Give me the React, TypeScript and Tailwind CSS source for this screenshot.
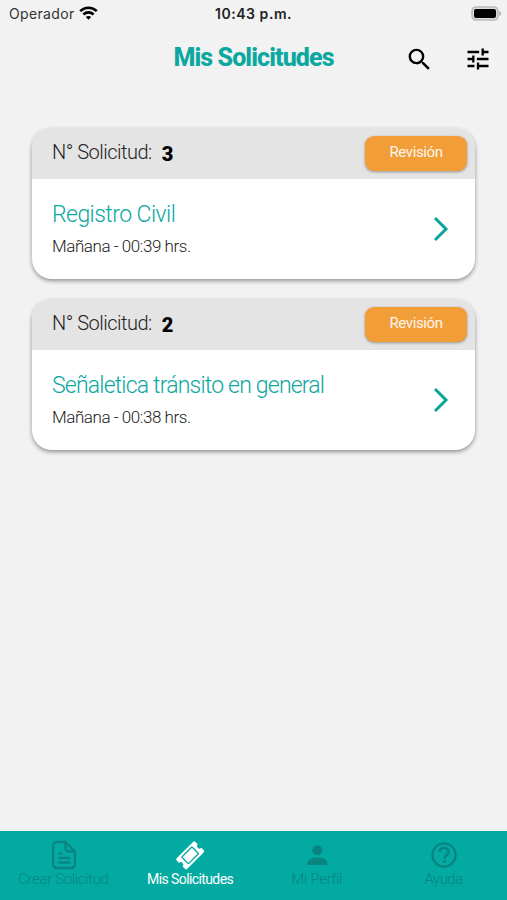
import { MdSearch, MdTune } from "react-icons/md";

const solicitudes = [
  {
    numero: 3,
    titulo: "Registro Civil",
    hora: "Mañana - 00:39 hrs.",
    estado: "Revisión",
    tracking: "tracking-[-0.55px]",
  },
  {
    numero: 2,
    titulo: "Señaletica tránsito en general",
    hora: "Mañana - 00:38 hrs.",
    estado: "Revisión",
    tracking: "tracking-[-0.8px]",
  },
];

function StatusBar() {
  return (
    <div className="grid h-7 grid-cols-3 items-center px-[9px] pb-0.5 font-['Inter',sans-serif] text-[14px] text-[#222]">
      <div className="flex items-center gap-1">
        <span className="tracking-[0.35px] text-[#333]">Operador</span>
        <svg className="h-[14px] w-[19px]" viewBox="0 0 19 14" fill="none" stroke="#000" strokeWidth="2.6">
          <path d="M1.2 5.2C5.8.6 13.2.6 17.8 5.2" />
          <path d="M4.4 8.5c2.9-2.8 7.3-2.8 10.2 0" />
          <path d="M9.5 13.7 6.8 11c1.5-1.4 3.9-1.4 5.4 0z" fill="#000" stroke="none" />
        </svg>
      </div>
      <span className="text-center font-semibold tracking-[0.55px] whitespace-nowrap">10:43 p.m.</span>
      <svg className="-mr-1 h-[15px] w-[31px] justify-self-end" viewBox="0 0 31 15">
        <rect x="1" y="1" width="26" height="13" rx="4" fill="#ddd" stroke="#bbb" strokeWidth="1.6" />
        <rect x="3" y="3" width="22" height="9" rx="2" fill="#000" />
        <path d="M28.4 5v5c2.2-.7 2.2-4.3 0-5z" fill="#aaa" />
      </svg>
    </div>
  );
}

function DocumentIcon() {
  return (
    <svg className="size-8" viewBox="0 0 32 32" fill="none" stroke="currentColor" strokeWidth="2.4" strokeLinecap="round" strokeLinejoin="round">
      <path d="M18.5 3H10a4 4 0 0 0-4 4v18a4 4 0 0 0 4 4h14a4 4 0 0 0 4-4V12.5z" />
      <path d="M18.5 3v5.5a4 4 0 0 0 4 4H28M12.5 14.500h2M12.5 19h10M12.5 23.500h10" />
    </svg>
  );
}

function TicketIcon() {
  return (
    <svg className="size-8" viewBox="0 0 32 32" fill="currentColor">
      <g transform="rotate(-45 16.5 16)">
        <path d="M4.5 8.5h23a1.7 1.7 0 0 1 1.7 1.7v3.3a2.5 2.5 0 0 0 0 5v3.3a1.7 1.7 0 0 1-1.7 1.7h-23a1.7 1.7 0 0 1-1.7-1.7v-3.3a2.500 2.500 0 0 0 0-5v-3.3a1.7 1.7 0 0 1 1.7-1.7z" />
        <rect x="8.8" y="11.3" width="14.4" height="9.4" rx="0.5" fill="none" stroke="#03aaa2" strokeWidth="1.3" />
      </g>
    </svg>
  );
}

function PersonIcon() {
  return (
    <svg className="size-8" viewBox="0 0 32 32" fill="currentColor">
      <circle cx="16.3" cy="11.3" r="5" />
      <path d="M6.300 26v-1.500c0-8 20-8 20 0V26z" />
    </svg>
  );
}

function HelpIcon() {
  return (
    <svg className="size-8" viewBox="0 0 32 32" fill="none" stroke="currentColor" strokeWidth="2.2">
      <circle cx="16" cy="16" r="11.6" />
      <path d="M11.7 13c0-5.8 9-5.5 9-.3 0 3.5-4.2 3.3-4.2 7" strokeWidth="2.6" />
      <path d="M16.4 21.2v2.7" strokeWidth="2.8" />
    </svg>
  );
}

const tabs = [
  { nombre: "Crear Solicitud", icono: <DocumentIcon />, clase: "tracking-[-0.35px] text-[#088580]" },
  { nombre: "Mis Solicitudes", icono: <TicketIcon />, clase: "text-[14px] font-normal tracking-[-0.6px] text-white" },
  { nombre: "Mi Perfil", icono: <PersonIcon />, clase: "tracking-[-0.3px] text-[#088580]" },
  { nombre: "Ayuda", icono: <HelpIcon />, clase: "tracking-[-0.5px] text-[#088580]" },
];

export default function App() {
  return (
    <main className="flex h-[900px] w-[507px] flex-col overflow-hidden bg-[#f2f2f2] font-['Roboto',sans-serif]">
      <StatusBar />
      <header className="grid h-[62px] grid-cols-[1fr_auto_1fr] items-center px-4">
        <h1 className="col-start-2 pb-[3px] text-[25px] leading-none font-extrabold tracking-[-0.9px] text-[#0ba8a0]">
          Mis Solicitudes
        </h1>
        <div className="flex items-center justify-end gap-[30px]">
          <MdSearch size={29} />
          <MdTune size={28} className="-mr-px" />
        </div>
      </header>

      <section className="flex flex-1 flex-col gap-5 px-8 pt-[38px]">
        {solicitudes.map((s) => (
          <article
            key={s.numero}
            className="h-[151px] overflow-hidden rounded-[20px] bg-white shadow-[0_2px_4px_rgba(0,0,0,0.4)]"
          >
            <div className="flex h-[51px] items-center justify-between bg-[#e4e4e4] pr-2 pl-5">
              <p className="flex items-center pb-1 text-[20px] font-light tracking-[-0.5px] text-[#222]">
                N° Solicitud: <b className="ml-2.5 pt-1 font-black text-black">{s.numero}</b>
              </p>
              <span className="flex h-[35px] w-[102px] items-center justify-center rounded-[9px] bg-[#f19d38] pb-0.5 text-[15px] tracking-[-0.4px] text-white/90 shadow-[0_1px_3px_rgba(0,0,0,0.35)]">
                {s.estado}
              </span>
            </div>
            <div className="flex h-[100px] items-center justify-between pr-[26px] pl-5">
              <div className="pt-0.5">
                <h2 className={`text-[23px] leading-8 font-light text-[#0ba8a0] ${s.tracking}`}>{s.titulo}</h2>
                <p className="text-[17px] leading-[31px] font-light tracking-[-0.45px] text-[#222]">{s.hora}</p>
              </div>
              <svg className="h-[26px] w-4" viewBox="0 0 16 26" fill="none" stroke="#0ba39b" strokeWidth="3">
                <path d="M2 2 13 13 2 24" />
              </svg>
            </div>
          </article>
        ))}
      </section>

      <nav className="grid h-[69px] grid-cols-4 bg-[#03aaa2] text-[15px] font-light">
        {tabs.map((tab) => (
          <a key={tab.nombre} className={`flex flex-col items-center pt-2 ${tab.clase}`}>
            {tab.icono}
            <span className="leading-[17px]">{tab.nombre}</span>
          </a>
        ))}
      </nav>
    </main>
  );
}
